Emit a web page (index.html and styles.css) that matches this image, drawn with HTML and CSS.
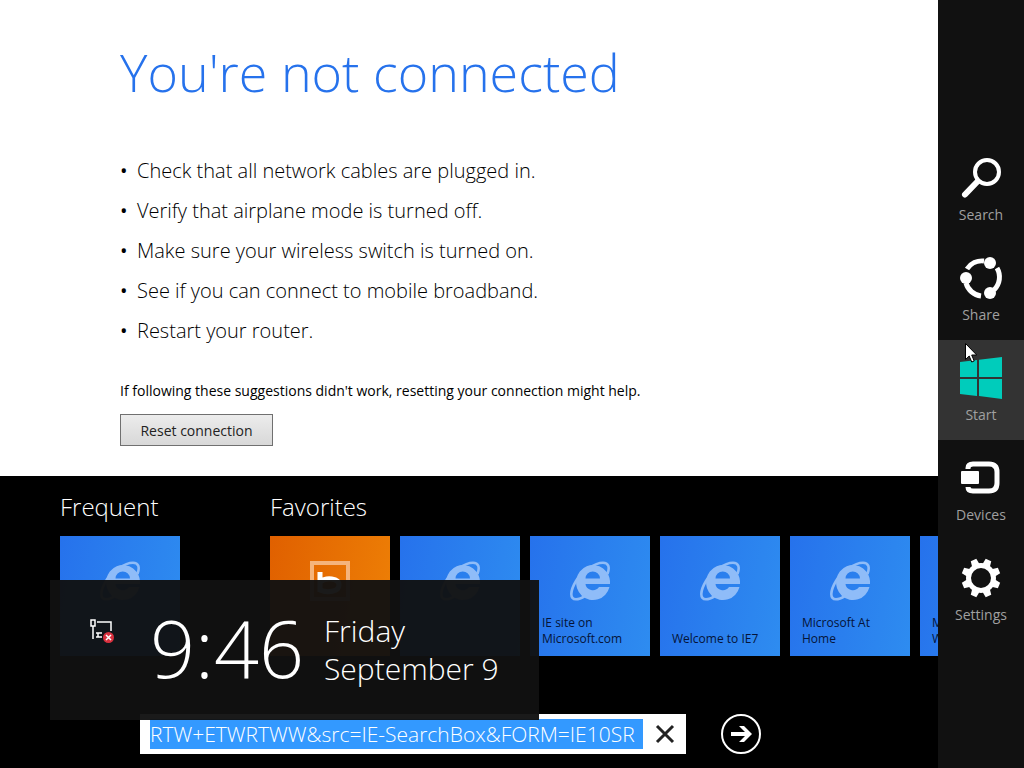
FILE: index.html
```html
<!DOCTYPE html>
<html lang="en">
  <head>
    <meta charset="UTF-8" />
    <meta name="viewport" content="width=device-width, initial-scale=1.0" />
    <title>You're not connected</title>
    <link rel="stylesheet" href="styles.css">
  </head>
  <body>
    <svg class="defs" aria-hidden="true">
      <symbol id="ie" viewBox="0 0 40 40">
        <path fill-rule="evenodd" d="M40 23H15.500a7.300 6.500 0 0 0 13.500 3h10.500A17 17.500 0 1 1 40 23zM15.500 17.500H30a7.250 7 0 0 0-14.500 0z" />
        <path fill="none" stroke="currentColor" stroke-width="2.600" d="M37.500 13C40 6 38.500 1.800 33 1.800C25 1.800 12 10 6 20C0 30-.500 38.300 6 38.300c3 0 6-1.500 9-3.500" />
      </symbol>
    </svg>

    <div class="desktop">
      <div class="browser">
        <main class="page">
          <h1>You're not connected</h1>
          <ul>
            <li>Check that all network cables are plugged in.</li>
            <li>Verify that airplane mode is turned off.</li>
            <li>Make sure your wireless switch is turned on.</li>
            <li>See if you can connect to mobile broadband.</li>
            <li>Restart your router.</li>
          </ul>
          <p>If following these suggestions didn't work, resetting your connection might help.</p>
          <button type="button" class="reset">Reset connection</button>
        </main>

        <footer class="appbar">
          <div class="groups">
            <section class="frequent">
              <h2>Frequent</h2>
              <div class="tiles">
                <a class="tile" href="#" aria-label="Frequent site"><svg><use href="#ie" /></svg></a>
              </div>
            </section>
            <section>
              <h2>Favorites</h2>
              <div class="tiles">
                <a class="tile bing" href="#" aria-label="Bing">
                  <svg viewBox="0 0 40 40">
                    <rect x="2" y="2" width="36" height="36" fill="none" stroke="#f5b47c" stroke-width="4" />
                    <path d="M10 11v20M10 21c6-5 19-4 19 3s-12 8-19 5" fill="none" stroke="#fff" stroke-width="5" />
                  </svg>
                </a>
                <a class="tile" href="#" aria-label="Favorite site"><svg><use href="#ie" /></svg></a>
                <a class="tile" href="#"><svg><use href="#ie" /></svg><span>IE site on Microsoft.com</span></a>
                <a class="tile" href="#"><svg><use href="#ie" /></svg><span>Welcome to IE7</span></a>
                <a class="tile" href="#"><svg><use href="#ie" /></svg><span>Microsoft At Home</span></a>
                <a class="tile" href="#"><svg><use href="#ie" /></svg><span>Microsoft At Work</span></a>
              </div>
            </section>
          </div>

          <form class="navigate">
            <div class="address">
              <input type="text" aria-label="Address" value="RTW+ETWRTWW&amp;src=IE-SearchBox&amp;FORM=IE10SR" />
              <button type="button" class="clear" aria-label="Clear">
                <svg width="20" height="20" viewBox="0 0 20 20"><path d="M2 2l16 16M18 2L2 18" /></svg>
              </button>
            </div>
            <button type="submit" class="go" aria-label="Go">
              <svg width="40" height="40" viewBox="0 0 40 40">
                <circle cx="20" cy="20" r="19" fill="none" stroke="#fff" stroke-width="2" />
                <path d="M10 18h14l-6-6h5l8 8-8 8h-5l6-6H10z" fill="#fff" />
              </svg>
            </button>
          </form>
        </footer>
      </div>

      <nav class="charms">
        <a href="#">
          <svg viewBox="0 0 44 44">
            <circle cx="28" cy="16" r="12" fill="none" stroke="#fff" stroke-width="4" />
            <path d="M18 26L6 38.500" stroke="#fff" stroke-width="6" stroke-linecap="round" />
          </svg>
          Search
        </a>
        <a href="#">
          <svg viewBox="0 0 44 44">
            <g fill="none" stroke="#fff" stroke-width="5">
              <path d="M8 13A18 18 0 0 1 25 5M38 12A18 18 0 0 1 35 34M22 40A18 18 0 0 1 7 27" />
            </g>
            <g fill="#fff"><circle cx="31" cy="7" r="6" /><circle cx="7" cy="22" r="6" /><circle cx="31" cy="37" r="6" /></g>
          </svg>
          Share
        </a>
        <a href="#" class="active">
          <svg viewBox="0 0 44 44">
            <path fill="#00ccbb" d="M1 6l17-2v17H1zM20 3.700L43 1v20H20zM1 23h17v17L1 38zM20 23h23v20l-23-3z" />
          </svg>
          Start
        </a>
        <a href="#">
          <svg viewBox="0 0 44 44">
            <path d="M9 13v-1q0-4 5-4h16q8 0 8 8v11q0 8-8 8H14q-5 0-5-4" fill="none" stroke="#fff" stroke-width="5" />
            <path d="M0 13h22v17H0z" fill="#111" />
            <rect x="2" y="15" width="18" height="13" rx="1" fill="#fff" />
          </svg>
          Devices
        </a>
        <a href="#">
          <svg viewBox="0 0 44 44">
            <circle cx="22" cy="22" r="12.500" fill="none" stroke="#fff" stroke-width="5" />
            <g fill="#fff">
              <path id="tooth" d="M18 9l1-6.500h6L26 9z" transform="rotate(22.500 22 22)" />
              <use href="#tooth" transform="rotate(45 22 22)" />
              <use href="#tooth" transform="rotate(90 22 22)" />
              <use href="#tooth" transform="rotate(135 22 22)" />
              <use href="#tooth" transform="rotate(180 22 22)" />
              <use href="#tooth" transform="rotate(225 22 22)" />
              <use href="#tooth" transform="rotate(270 22 22)" />
              <use href="#tooth" transform="rotate(315 22 22)" />
            </g>
          </svg>
          Settings
        </a>
      </nav>
    </div>

    <div class="clock">
      <svg class="network" width="26" height="26" viewBox="0 0 26 26">
        <path d="M1 1h4v6H1zM3 7v13M7 3h14v9M6 14h6M8 14v4M6 18h6" fill="none" stroke="#fff" stroke-width="1.500" />
        <circle cx="18.500" cy="18.500" r="5.500" fill="#d9303e" />
        <path d="M16 16l5 5M21 16l-5 5" stroke="#fff" stroke-width="1.500" />
      </svg>
      <time class="time">9:46</time>
      <div class="date">Friday<br />September 9</div>
    </div>

    <svg class="cursor" width="12" height="20" viewBox="0 0 12 20">
      <path d="M.500.500v16l3.700-3.500 2.500 6 2.500-1-2.500-6h5z" fill="#fff" stroke="#000" />
    </svg>
  </body>
</html>
```
FILE: styles.css
```css
* {
  box-sizing: border-box;
}
body {
  margin: 0;
  font-family: "Open Sans", "Noto Sans", sans-serif;
  font-size: 14px;
  background: #000;
}
button {
  font-family: inherit;
  padding: 0;
  cursor: pointer;
}
a {
  text-decoration: none;
}
.defs {
  display: none;
}
.desktop {
  display: flex;
  min-height: 100vh;
}
.browser {
  flex: 1;
  min-width: 0;
  display: flex;
  flex-direction: column;
  overflow: hidden;
}

/* error page */
.page {
  flex: 1;
  background: #fff;
  padding: 37px 120px 30px;
}
h1 {
  margin: 0;
  font-size: 52px;
  line-height: 70px;
  font-weight: 300;
  color: #2672ec;
}
.page ul {
  margin: 44px 0 0;
  padding: 0 0 0 17px;
  list-style: none;
}
.page li {
  font-size: 20px;
  line-height: 40px;
  font-weight: 300;
}
.page li::before {
  content: "•";
  float: left;
  margin-left: -17px;
  font-weight: 400;
}
.page p {
  margin: 30px 0 13px;
  font-size: 14px;
  line-height: 20px;
}
.reset {
  width: 153px;
  height: 32px;
  border: 1px solid #707070;
  background: linear-gradient(#ececec, #d8d8d8);
  font-size: 14px;
  color: #222;
}

/* bottom app bar */
.appbar {
  background: #000;
  padding: 14px 0 14px 60px;
}
.groups {
  display: flex;
  gap: 90px;
}
h2 {
  margin: 0 0 12px;
  font-size: 24px;
  line-height: 34px;
  font-weight: 300;
  color: #fff;
}
.frequent {
  width: 120px;
}
.tiles {
  display: flex;
  gap: 10px;
}
.tile {
  flex: none;
  width: 120px;
  height: 120px;
  padding: 25px 12px 9px;
  display: flex;
  flex-direction: column;
  justify-content: space-between;
  background: linear-gradient(100deg, #2672ec, #2e8cf0);
  color: #051438;
  font-size: 12px;
  line-height: 16px;
}
.tile svg {
  align-self: center;
  width: 40px;
  height: 40px;
  fill: currentColor;
  color: #8fbcf8;
}
.bing {
  background: linear-gradient(100deg, #e06000, #ee8006);
}
.navigate {
  display: flex;
  gap: 35px;
  margin: 58px 0 0 80px;
}
.address {
  display: flex;
  width: 546px;
  height: 40px;
  padding: 5px 0 5px 10px;
  background: #fff;
}
.address input {
  flex: 1;
  min-width: 0;
  padding: 0;
  border: 0;
  outline: 0;
  background: #3399ff;
  color: #fff;
  font-family: inherit;
  font-size: 21px;
  font-weight: 300;
}
.clear {
  width: 43px;
  border: 0;
  background: none;
  display: flex;
  align-items: center;
  justify-content: center;
}
.clear path {
  stroke: #222;
  stroke-width: 3;
}
.go {
  width: 40px;
  height: 40px;
  border: 0;
  background: none;
}

/* charms */
.charms {
  width: 86px;
  background: #111;
  display: flex;
  flex-direction: column;
  justify-content: center;
  padding-top: 12px;
}
.charms a {
  height: 100px;
  padding-top: 16px;
  display: flex;
  flex-direction: column;
  align-items: center;
  gap: 4px;
  color: #a0a0a0;
  font-size: 14px;
  line-height: 22px;
}
.charms svg {
  width: 44px;
  height: 44px;
}
.charms .active {
  background: #333;
}

.clock {
  position: absolute;
  left: 50px;
  bottom: 48px;
  width: 489px;
  height: 140px;
  padding-left: 40px;
  display: flex;
  align-items: center;
  background: rgba(17, 17, 17, 0.96);
  color: #fff;
}
.network {
  margin-bottom: 36px;
}
.time {
  width: 174px;
  margin-left: 34px;
  padding-bottom: 6px;
  font-size: 79px;
  font-weight: 300;
}
.date {
  font-size: 30px;
  line-height: 38px;
  font-weight: 300;
  white-space: nowrap;
}
.cursor {
  position: absolute;
  left: 965px;
  top: 343px;
}
```
